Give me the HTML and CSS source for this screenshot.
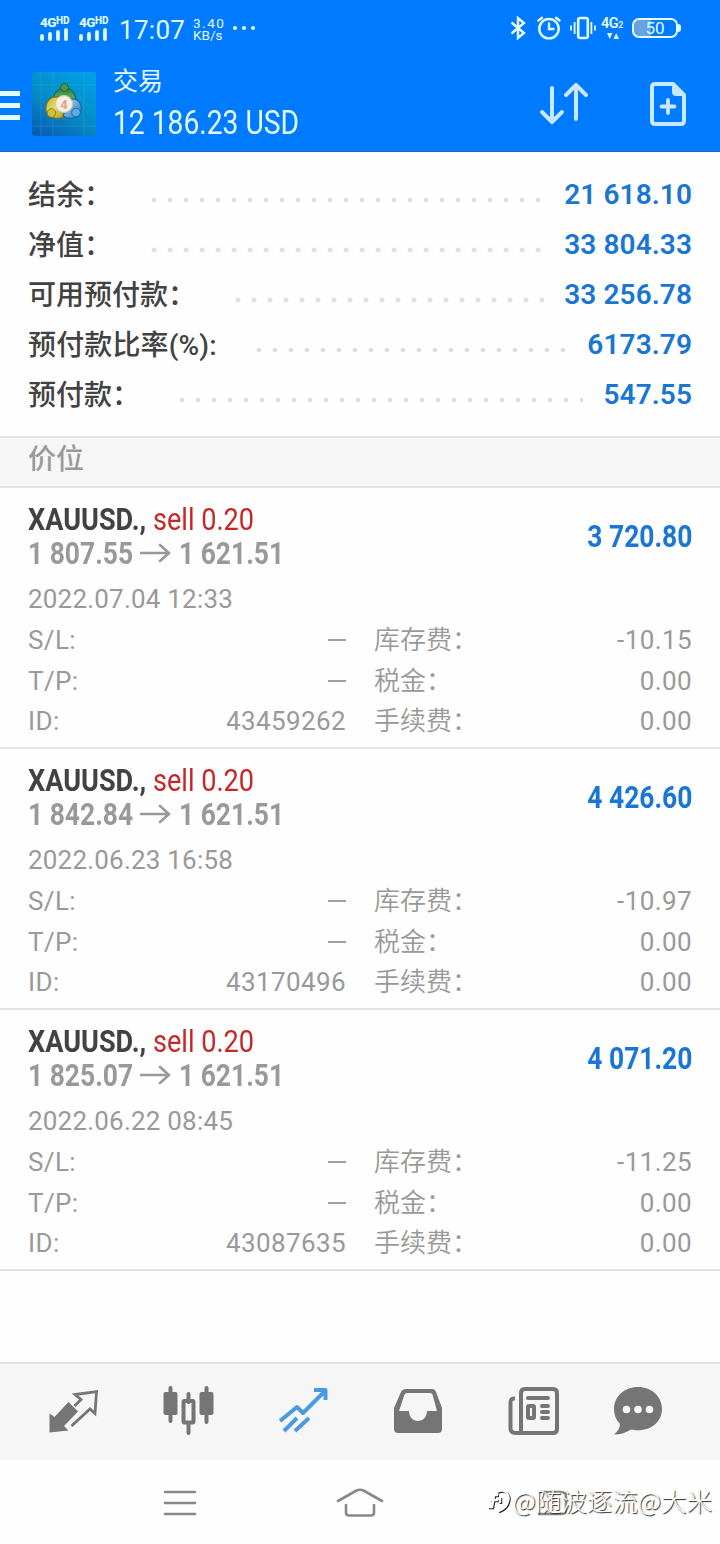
FILE: index.html
```html
<!DOCTYPE html>
<html lang="zh-CN">
<head>
<meta charset="utf-8">
<title>交易</title>
<link rel="stylesheet" href="styles.css">
</head>
<body>
<div class="screen">
  <header class="header">
    <div class="status">
      <div class="signal"><span class="net">4G<small>HD</small></span><svg width="28" height="13" viewBox="0 0 28 13"><path d="M2 8v3M10 6v5M18 4v7M26 2v9" stroke="currentColor" stroke-width="3.8" stroke-linecap="round"/></svg></div>
      <div class="signal"><span class="net">4G<small>HD</small></span><svg width="28" height="13" viewBox="0 0 28 13"><path d="M2 8v3M10 6v5M18 4v7M26 2v9" stroke="currentColor" stroke-width="3.8" stroke-linecap="round"/></svg></div>
      <div class="clock">17:07</div>
      <div class="speed"><span>3.40</span><span>KB/s</span></div>
      <svg class="more" width="24" height="6" viewBox="0 0 24 6" fill="currentColor"><circle cx="3" cy="3" r="2.1"/><circle cx="12" cy="3" r="2.1"/><circle cx="21" cy="3" r="2.1"/></svg>
      <div class="status-right">
        <svg width="16" height="24" viewBox="0 0 16 24" fill="none" stroke="currentColor" stroke-width="2.4"><path d="M1.5 6.5 14 17l-6 5V2L14 7 1.5 17.5"/></svg>
        <svg class="alarm" width="24" height="24" viewBox="0 0 24 24" fill="none" stroke="currentColor" stroke-width="2.4" stroke-linecap="round"><circle cx="12" cy="12.7" r="9.7"/><path d="M12 7.500v5.500h4.500M1.500 4.500 5 1.800M22.500 4.500 19 1.800"/></svg>
        <svg class="vibrate" width="26" height="24" viewBox="0 0 26 24" fill="none" stroke="currentColor" stroke-width="1.8"><rect x="8.200" y="2" width="9.600" height="20" rx="2" stroke-width="2.600"/><path d="M4.600 6v12M1 9.500v5M21.400 6v12M25 9.500v5"/></svg>
        <div class="mobile"><span>4G<small>2</small></span><svg width="12" height="6" viewBox="0 0 12 6" fill="currentColor"><path d="M0 0h5.400L2.700 6zM6.500 6H12L9.200 0z"/></svg></div>
        <div class="battery"><span class="battery-text">50</span></div>
      </div>
    </div>
    <div class="toolbar">
      <svg class="menu" width="20" height="30" viewBox="0 0 20 30" fill="currentColor"><path d="M0 0h20v5H0zM0 12h20v5H0zM0 24h20v5H0z"/></svg>
      <svg class="logo" width="64" height="64" viewBox="0 0 64 64">
        <defs>
          <linearGradient id="tile" x1=".8" y1="0" x2=".2" y2="1"><stop offset="0" stop-color="#009fe6"/><stop offset=".55" stop-color="#078bc6"/><stop offset="1" stop-color="#0860b4"/></linearGradient>
          <linearGradient id="green" x1="0" y1="0" x2="0" y2="1"><stop offset="0" stop-color="#2b843c"/><stop offset="1" stop-color="#8fcf80"/></linearGradient>
          <linearGradient id="gold" x1="0" y1="0" x2="1" y2="1"><stop offset="0" stop-color="#b8b83c"/><stop offset=".5" stop-color="#e6dc62"/><stop offset="1" stop-color="#a99816"/></linearGradient>
          <linearGradient id="blue" x1="0" y1="0" x2="1" y2="1"><stop offset="0" stop-color="#a8dcf6"/><stop offset="1" stop-color="#2674ba"/></linearGradient>
        </defs>
        <rect width="64" height="64" rx="3" fill="url(#tile)"/>
        <path d="M9 0v64M21 0v64M52 0v64M0 13h64M0 54h64" stroke="#36b7dc" stroke-width=".7" opacity=".4"/>
        <path d="M21 30c0-9 5-14 12-14s11 6 11 14l-11 7z" fill="url(#green)" stroke="#1c6244" stroke-width="1.200"/>
        <path d="M26 25c-9-1-13 6-12 14 2 7 12 9 18 6V31z" fill="url(#gold)" stroke="#776e18" stroke-width="1.200"/>
        <path d="M38 27c9-1 12 5 11 12-2 8-12 9-18 5z" fill="url(#blue)" stroke="#24659b" stroke-width="1.200"/>
        <circle cx="32.500" cy="15.500" r="4" fill="#4b9940" stroke="#1c6244"/>
        <circle cx="19.500" cy="41" r="4.300" fill="#c9c23f" stroke="#8a7d19"/>
        <circle cx="44" cy="40.500" r="4.300" fill="#5baee2" stroke="#24659b"/>
        <circle cx="32" cy="32" r="8.400" fill="#f5f0e5" stroke="#d8ceb5"/>
        <text class="logo-num" x="32" y="37" text-anchor="middle">4</text>
      </svg>
      <div class="account">
        <div class="title">交易</div>
        <div class="balance"><span class="cond">12 186.23 USD</span></div>
      </div>
      <svg class="sort" width="50" height="44" viewBox="0 0 50 44" fill="none" stroke="currentColor" stroke-width="4" stroke-linecap="round" stroke-linejoin="round"><path d="M13 6v34M3 30l10 10 10-10M37 37V3M27 13 37 3l10 10"/></svg>
      <svg class="new" width="36" height="44" viewBox="0 0 36 44" fill="none" stroke="currentColor" stroke-width="4" stroke-linecap="round" stroke-linejoin="round"><path d="M5 2h18l11 11v26q0 3-3 3H5q-3 0-3-3V5q0-3 3-3z"/><path d="M23 3v7q0 3 3 3h8z" fill="currentColor" stroke-width="2"/><path d="M18 18v13M11.500 24.500h13" stroke-width="3.800"/></svg>
    </div>
  </header>

  <section class="summary">
    <div class="sum-row"><span class="label">结余：</span><i class="dots"></i><b>21 618.10</b></div>
    <div class="sum-row"><span class="label">净值：</span><i class="dots"></i><b>33 804.33</b></div>
    <div class="sum-row"><span class="label">可用预付款：</span><i class="dots"></i><b>33 256.78</b></div>
    <div class="sum-row"><span class="label ratio">预付款比率(%):</span><i class="dots"></i><b>6173.79</b></div>
    <div class="sum-row"><span class="label">预付款：</span><i class="dots"></i><b>547.55</b></div>
  </section>
  <h2 class="section">价位</h2>

  <main class="positions">
    <article class="position">
      <div class="head">
        <div class="deal">
          <div class="symbol"><span class="cond"><b>XAUUSD.,</b> <em>sell 0.20</em></span></div>
          <div class="prices"><span class="cond">1 807.55</span><svg width="32" height="20" viewBox="0 0 32 20"><path d="M1 10h28M20 2l9 8-9 8"/></svg><span class="cond">1 621.51</span></div>
        </div>
        <div class="profit"><span class="cond">3 720.80</span></div>
      </div>
      <div class="date">2022.07.04 12:33</div>
      <dl class="details">
        <dt>S/L:</dt><dd><i class="dash"></i></dd><dt>库存费：</dt><dd>-10.15</dd>
        <dt>T/P:</dt><dd><i class="dash"></i></dd><dt>税金：</dt><dd>0.00</dd>
        <dt>ID:</dt><dd>43459262</dd><dt>手续费：</dt><dd>0.00</dd>
      </dl>
    </article>
    <article class="position">
      <div class="head">
        <div class="deal">
          <div class="symbol"><span class="cond"><b>XAUUSD.,</b> <em>sell 0.20</em></span></div>
          <div class="prices"><span class="cond">1 842.84</span><svg width="32" height="20" viewBox="0 0 32 20"><path d="M1 10h28M20 2l9 8-9 8"/></svg><span class="cond">1 621.51</span></div>
        </div>
        <div class="profit"><span class="cond">4 426.60</span></div>
      </div>
      <div class="date">2022.06.23 16:58</div>
      <dl class="details">
        <dt>S/L:</dt><dd><i class="dash"></i></dd><dt>库存费：</dt><dd>-10.97</dd>
        <dt>T/P:</dt><dd><i class="dash"></i></dd><dt>税金：</dt><dd>0.00</dd>
        <dt>ID:</dt><dd>43170496</dd><dt>手续费：</dt><dd>0.00</dd>
      </dl>
    </article>
    <article class="position">
      <div class="head">
        <div class="deal">
          <div class="symbol"><span class="cond"><b>XAUUSD.,</b> <em>sell 0.20</em></span></div>
          <div class="prices"><span class="cond">1 825.07</span><svg width="32" height="20" viewBox="0 0 32 20"><path d="M1 10h28M20 2l9 8-9 8"/></svg><span class="cond">1 621.51</span></div>
        </div>
        <div class="profit"><span class="cond">4 071.20</span></div>
      </div>
      <div class="date">2022.06.22 08:45</div>
      <dl class="details">
        <dt>S/L:</dt><dd><i class="dash"></i></dd><dt>库存费：</dt><dd>-11.25</dd>
        <dt>T/P:</dt><dd><i class="dash"></i></dd><dt>税金：</dt><dd>0.00</dd>
        <dt>ID:</dt><dd>43087635</dd><dt>手续费：</dt><dd>0.00</dd>
      </dl>
    </article>
  </main>

  <nav class="tabs">
    <svg width="52" height="52" viewBox="0 0 52 52"><path d="M2.500 48.500V29.500l5 3.500L21.500 18l9.500 9.500L17 42l4.500 4.500z" fill="currentColor"/><path d="M27.500 22l6.500-6.500L28 10.500 49.500 7.500 48 29.500 43 25 24.500 42" fill="none" stroke="currentColor" stroke-width="2.800"/></svg>
    <svg width="52" height="52" viewBox="0 0 52 52"><path d="M8.500 4v33M44.500 4v34M26.500 10v8M26.500 41v8" stroke="currentColor" stroke-width="4" stroke-linecap="round"/><rect x="1.500" y="8" width="14" height="23" rx="2" fill="currentColor"/><rect x="37.500" y="8" width="14" height="23" rx="2" fill="currentColor"/><rect x="21.500" y="17" width="10" height="21.500" rx="1" fill="none" stroke="currentColor" stroke-width="4"/></svg>
    <svg class="active" width="52" height="52" viewBox="0 0 52 52" fill="none" stroke="currentColor" stroke-width="4"><path d="m3 37 17-14 6 6L48 7M37 6h11.500v10M7 47l13-13M18 47l14-13" stroke-linejoin="round"/></svg>
    <svg width="52" height="52" viewBox="0 0 52 52" fill="currentColor"><path fill-rule="evenodd" d="M14 5h26q3 0 4 3l6 16v21q0 4-4 4H6q-4 0-4-4V24L9 8q1.500-3 5-3zm1 4q-2 0-2.500 1.500L7 27h10c0 6 4 10 9 10s9-4 9-10h10L40.500 10.500Q40 9 38 9z"/></svg>
    <svg width="52" height="52" viewBox="0 0 52 52" fill="none" stroke="currentColor" stroke-width="4"><path d="M8 14.500q-4.500-.5-4.500 4V44q0 5 5 5H46q4 0 4-4V9q0-4-4-4H18q-4 0-4 4v40"/><path d="M21 14h20M35 22h6M35 28h6M35 34h6" stroke-linecap="round"/><rect x="21" y="22" width="6" height="12" rx="1"/></svg>
    <svg class="chat" width="52" height="52" viewBox="0 0 52 52"><path fill="currentColor" d="M27 3C13 3 3 13 3 25c0 6 2 11 6 15 0 4-2 7-6 10.500 7 0 12-2 17-5 2 .6 4 .8 7 .8 14 0 24-9.300 24-21.300S41 3 27 3z"/><g fill="#f6f6f6"><circle cx="15.500" cy="25.500" r="3.800"/><circle cx="27" cy="25.500" r="3.800"/><circle cx="38.500" cy="25.500" r="3.800"/></g></svg>
  </nav>
  <footer class="sysnav">
    <svg width="34" height="28" viewBox="0 0 34 28"><path d="M2 3h30M2 14h30M2 25h30"/></svg>
    <svg class="home" width="48" height="32" viewBox="0 0 48 32"><path d="M2 14 20.500 3.500q3.500-1.500 7 0L46 14M10 18v7.500q0 3 3 3h22q3 0 3-3V18"/></svg>
    <svg class="back" width="34" height="30" viewBox="0 0 34 30"><path d="M3 4h22q5 0 5 5v12q0 5-5 5H3"/></svg>
    <div class="watermark"><svg width="24" height="28" viewBox="0 0 24 28"><path d="M1 21h4l2-12h4M3 14h8M10 6c9-5 14 4 10 12-2 4-5 6-9 7M13 11v6"/></svg><span>@随波逐流@大米</span></div>
  </footer>
</div>
</body>
</html>
```
FILE: styles.css
```css
* { box-sizing: border-box; }
body { margin: 0; background: #fefefe; font-family: Roboto, "Noto Sans CJK SC", sans-serif; }
svg { display: block; flex: none; }
.screen { width: 720px; height: 1544px; display: flex; flex-direction: column; overflow: hidden; }

.header { height: 152px; background: #007aff; border-bottom: 1px solid #1f66b8; color: #e2fbff; }
.status { height: 56px; display: flex; align-items: center; padding-left: 40px; }
.signal { width: 39px; display: flex; flex-direction: column; }
.net { font-size: 13.500px; line-height: 12px; font-weight: 800; white-space: nowrap; letter-spacing: -.5px; }
.net small { font-size: 10px; vertical-align: 3px; line-height: 8px; letter-spacing: 0; }
.clock { width: 74px; margin-top: 3px; font-size: 26px; letter-spacing: .3px; padding-left: 1px; }
.speed { width: 40px; display: flex; flex-direction: column; font-size: 13.500px; line-height: 12.500px; margin-top: 2px; padding-left: 1px; }
.speed span:first-child { letter-spacing: 1.500px; }
.status-right { margin-left: auto; padding-right: 40px; display: flex; align-items: center; }
.alarm { margin-left: 11px; }
.vibrate { margin-left: 9px; }
.mobile { width: 25px; margin-left: 5px; font-size: 14.500px; line-height: 14px; display: flex; flex-direction: column; gap: 1px; font-weight: 600; letter-spacing: -.5px; white-space: nowrap; }
.mobile small { font-size: 9px; }
.mobile svg { margin-left: 6px; }
.battery { width: 46px; height: 20px; margin: 0 2px 0 6px; border: 2px solid currentColor; border-radius: 7px; background: linear-gradient(90deg, #66a3e2 40%, transparent 40%); position: relative; display: flex; justify-content: center; align-items: center; font-size: 17px; }
.battery::after { content: ""; position: absolute; right: -5px; top: 4px; width: 3px; height: 8px; border-radius: 0 3px 3px 0; background: currentColor; }
.toolbar { height: 95px; display: flex; align-items: center; }
.menu { margin-top: 4px; }
.logo { margin-left: 12px; }
.logo-num { font: 700 13px Roboto, sans-serif; fill: #e3a27f; }
.account { margin: 3px 0 0 17px; width: 400px; }
.title { font-size: 25px; line-height: 36px; }
.balance { font-size: 33px; line-height: 46px; }
.cond { display: inline-block; white-space: nowrap; transform: scaleX(.855); transform-origin: left center; }
.sort { margin-left: 26px; color: #c8e8ff; }
.new { margin-left: 61px; color: #c8e8ff; }

.summary { height: 286px; padding: 17px 28px 0; border-bottom: 2px solid #e4e4e4; }
.sum-row { height: 50px; display: flex; align-items: center; font-size: 28px; font-weight: 500; color: #424242; white-space: nowrap; }
.label { margin-bottom: 3px; }
.ratio { letter-spacing: .15px; }
.sum-row b { font-weight: 600; color: #1976d2; letter-spacing: .1px; }
.dots { flex: 1; height: 6px; margin: 11px 20px 0 39px; background: radial-gradient(circle at 3px 3px, #dedede 1.800px, transparent 2.800px) 0 0 / 16px 6px; }
.section { margin: 0; height: 50px; padding: 0 28px; background: #f6f6f6; border-bottom: 2px solid #e4e4e4; font-size: 28px; line-height: 44px; font-weight: 500; color: #999; }

.position { height: 261px; padding: 14px 28px 0; border-bottom: 2px solid #e4e4e4; color: #999; }
.head { display: flex; justify-content: space-between; align-items: center; height: 68px; }
.symbol, .prices { height: 34px; line-height: 34px; font-size: 32px; }
.symbol .cond { transform: scaleX(.847); }
.symbol b { color: #424242; font-weight: 700; }
.symbol em { color: #c62828; font-style: normal; }
.prices { display: flex; align-items: center; font-weight: 700; }
.prices .cond { width: 128px; margin-right: -16px; transform: scaleX(.825); }
.prices svg { margin-right: 7px; }
.prices path { fill: none; stroke: #999; stroke-width: 2.600; stroke-linecap: round; }
.profit { font-size: 32px; font-weight: 700; color: #1976d2; }
.profit .cond { transform: scaleX(.825); transform-origin: right center; }
.date { margin-top: 9px; height: 40px; line-height: 40px; font-size: 26px; letter-spacing: .2px; }
.details { margin: 0; display: grid; grid-template-columns: 100px 218px 150px 1fr; grid-auto-rows: 40.500px; line-height: 42px; font-size: 26px; letter-spacing: .4px; }
.details dt { white-space: nowrap; }
.details dt:nth-of-type(even) { padding-left: 28px; font-weight: 350; letter-spacing: 0; }
.details dd { margin: 0; text-align: right; }
.dash { display: inline-block; width: 18px; height: 2px; background: #a0a0a0; vertical-align: 8px; }

.tabs { margin-top: auto; height: 98px; padding: 0 0 5px 47px; background: #f6f6f6; border-top: 2px solid #e0e0e0; color: #757575; display: flex; align-items: center; gap: 63px; }
.active { color: #4a9ae0; }
.chat { margin-left: -11px; }
.sysnav { position: relative; height: 84px; display: flex; align-items: center; padding: 1px 0 0 163px; }
.sysnav > svg { fill: none; stroke: #888; stroke-width: 2.600; stroke-linecap: round; }
.home { margin-left: 139px; }
.back { margin-left: 152px; }
.watermark { position: absolute; right: 8px; top: 22px; display: flex; align-items: center; gap: 2px; color: #fff; font: 300 25.500px/36px "Noto Sans CJK SC", sans-serif; white-space: nowrap; text-shadow: 1px 1px 1px #222; }
.watermark svg { fill: none; stroke: #fff; stroke-width: 2.500; filter: drop-shadow(1px 1px .5px #222); }
```
